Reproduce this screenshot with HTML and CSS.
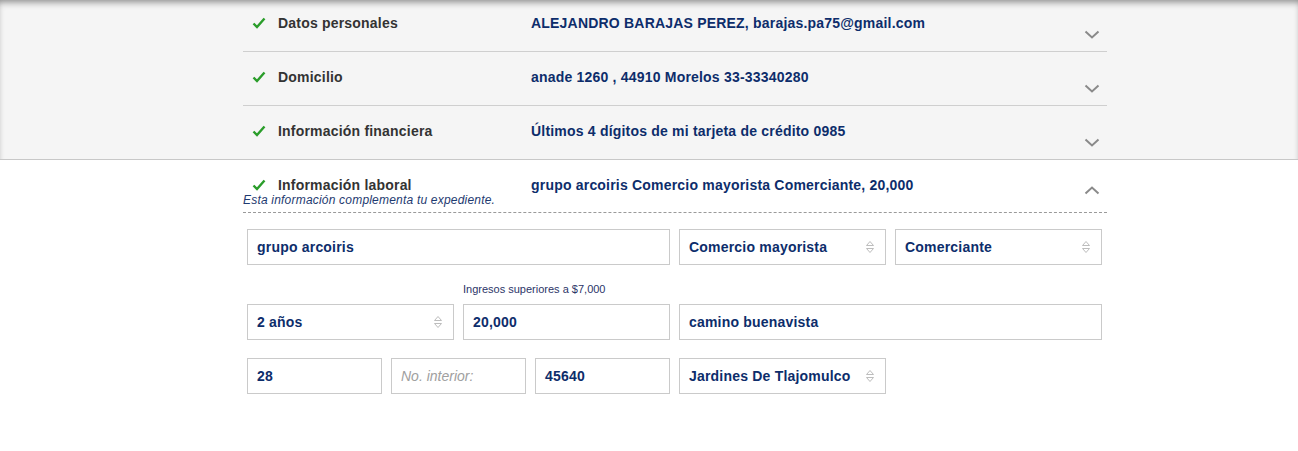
FILE: index.html
```html
<!DOCTYPE html>
<html lang="es">
<head>
<meta charset="utf-8">
<link rel="stylesheet" href="styles.css">
</head>
<body>
<div class="summary">
  <div class="page">
    <div class="list">
      <div class="row">
        <svg class="check" viewBox="0 0 14 12" width="14" height="12"><path d="M1.5 6.5 L5 10 L12.5 1.5" fill="none" stroke="#2a9d2a" stroke-width="2.4"/></svg>
        <span class="label">Datos personales</span>
        <span class="value">ALEJANDRO BARAJAS PEREZ, barajas.pa75@gmail.com</span>
        <svg class="chev" viewBox="0 0 16 9" width="16" height="9"><path d="M1.5 1.5 L8 7.5 L14.5 1.5" fill="none" stroke="#8a8a8a" stroke-width="2"/></svg>
      </div>
      <div class="row">
        <svg class="check" viewBox="0 0 14 12" width="14" height="12"><path d="M1.5 6.5 L5 10 L12.5 1.5" fill="none" stroke="#2a9d2a" stroke-width="2.4"/></svg>
        <span class="label">Domicilio</span>
        <span class="value">anade 1260 , 44910 Morelos 33-33340280</span>
        <svg class="chev" viewBox="0 0 16 9" width="16" height="9"><path d="M1.5 1.5 L8 7.5 L14.5 1.5" fill="none" stroke="#8a8a8a" stroke-width="2"/></svg>
      </div>
      <div class="row">
        <svg class="check" viewBox="0 0 14 12" width="14" height="12"><path d="M1.5 6.5 L5 10 L12.5 1.5" fill="none" stroke="#2a9d2a" stroke-width="2.4"/></svg>
        <span class="label">Información financiera</span>
        <span class="value">Últimos 4 dígitos de mi tarjeta de crédito 0985</span>
        <svg class="chev" viewBox="0 0 16 9" width="16" height="9"><path d="M1.5 1.5 L8 7.5 L14.5 1.5" fill="none" stroke="#8a8a8a" stroke-width="2"/></svg>
      </div>
    </div>
  </div>
</div>

<div class="page">
  <div class="open-head">
    <div class="open-row">
      <svg class="check" viewBox="0 0 14 12" width="14" height="12"><path d="M1.5 6.5 L5 10 L12.5 1.5" fill="none" stroke="#2a9d2a" stroke-width="2.4"/></svg>
      <span class="label">Información laboral</span>
      <span class="value">grupo arcoiris Comercio mayorista Comerciante, 20,000</span>
      <svg class="chev up" viewBox="0 0 16 9" width="16" height="9"><path d="M1.5 7.5 L8 1.5 L14.5 7.5" fill="none" stroke="#8a8a8a" stroke-width="2"/></svg>
    </div>
    <p class="note">Esta información complementa tu expediente.</p>
  </div>

  <div class="form">
    <div class="field span2">grupo arcoiris</div>
    <div class="field select">Comercio mayorista<svg class="arrows" viewBox="0 0 10 14" width="10" height="14"><path d="M1.5 5.5 L5 1.5 L8.5 5.5 Z M1.5 8.5 L5 12.5 L8.5 8.5 Z" fill="none" stroke="#bdbdbd" stroke-width="1"/></svg></div>
    <div class="field select">Comerciante<svg class="arrows" viewBox="0 0 10 14" width="10" height="14"><path d="M1.5 5.5 L5 1.5 L8.5 5.5 Z M1.5 8.5 L5 12.5 L8.5 8.5 Z" fill="none" stroke="#bdbdbd" stroke-width="1"/></svg></div>

    <div class="field select">2 años<svg class="arrows" viewBox="0 0 10 14" width="10" height="14"><path d="M1.5 5.5 L5 1.5 L8.5 5.5 Z M1.5 8.5 L5 12.5 L8.5 8.5 Z" fill="none" stroke="#bdbdbd" stroke-width="1"/></svg></div>
    <div class="labeled">
      <span class="hint">Ingresos superiores a $7,000</span>
      <div class="field">20,000</div>
    </div>
    <div class="field span2">camino buenavista</div>

    <div class="triple span2">
      <div class="field">28</div>
      <div class="field placeholder">No. interior:</div>
      <div class="field">45640</div>
    </div>
    <div class="field select">Jardines De Tlajomulco<svg class="arrows" viewBox="0 0 10 14" width="10" height="14"><path d="M1.5 5.5 L5 1.5 L8.5 5.5 Z M1.5 8.5 L5 12.5 L8.5 8.5 Z" fill="none" stroke="#bdbdbd" stroke-width="1"/></svg></div>
  </div>
</div>
</body>
</html>
```
FILE: styles.css
```css
* { box-sizing: border-box; }
html, body { margin: 0; padding: 0; background: #fff; }
body {
  font-family: "Liberation Sans", Arial, sans-serif;
  font-size: 14px;
  color: #333;
}
.summary {
  background: #f5f5f5;
  border-bottom: 1px solid #c8c8c8;
  box-shadow: inset 0 7px 7px -3px rgba(0,0,0,0.45);
}
.page {
  padding: 0 191px 0 243px;
}
.list {
  margin-top: -2px;
}
.row {
  display: flex;
  align-items: flex-start;
  height: 54px;
  padding-top: 17px;
  border-bottom: 1px solid #cfcfcf;
}
.row:last-child {
  border-bottom: none;
  height: 53px;
}
.check {
  flex: none;
  margin: 2px 0 0 9px;
}
.label {
  flex: none;
  width: 253px;
  margin-left: 12px;
  font-weight: bold;
  line-height: 16px;
  letter-spacing: 0.2px;
  color: #333;
}
.value {
  flex: 1;
  font-weight: bold;
  line-height: 16px;
  letter-spacing: 0.2px;
  color: #0d2d6b;
}
.chev {
  flex: none;
  margin: 15px 7px 0 0;
}
.open-head {
  padding-top: 17px;
  border-bottom: 1px dashed #9a9a9a;
  padding-bottom: 5px;
}
.open-row {
  display: flex;
  align-items: flex-start;
  height: 16px;
}
.open-row .check { margin-top: 2px; }
.chev.up { margin-top: 9px; }
.note {
  margin: 0;
  font-size: 12px;
  font-style: italic;
  line-height: 14px;
  letter-spacing: 0.2px;
  color: #1e3a70;
}
.form {
  display: grid;
  grid-template-columns: repeat(4, 207px);
  column-gap: 9px;
  row-gap: 18px;
  align-items: end;
  padding: 16px 0 0 4px;
}
.span2 { grid-column: span 2; }
.field {
  position: relative;
  height: 36px;
  border: 1px solid #cacaca;
  background: #fff;
  padding: 0 10px 0 9px;
  display: flex;
  align-items: center;
  font-weight: bold;
  font-size: 14px;
  letter-spacing: 0.2px;
  color: #0d2d6b;
}
.field.placeholder {
  font-weight: normal;
  font-style: italic;
  letter-spacing: 0;
  color: #a0a0a0;
}
.select .arrows {
  margin-left: auto;
  flex: none;
}
.labeled {
  display: flex;
  flex-direction: column;
}
.hint {
  font-size: 11px;
  line-height: 13px;
  color: #2c3568;
  margin: 0 0 8px 0;
}
.triple {
  display: grid;
  grid-template-columns: repeat(3, 135px);
  column-gap: 9px;
}
```
